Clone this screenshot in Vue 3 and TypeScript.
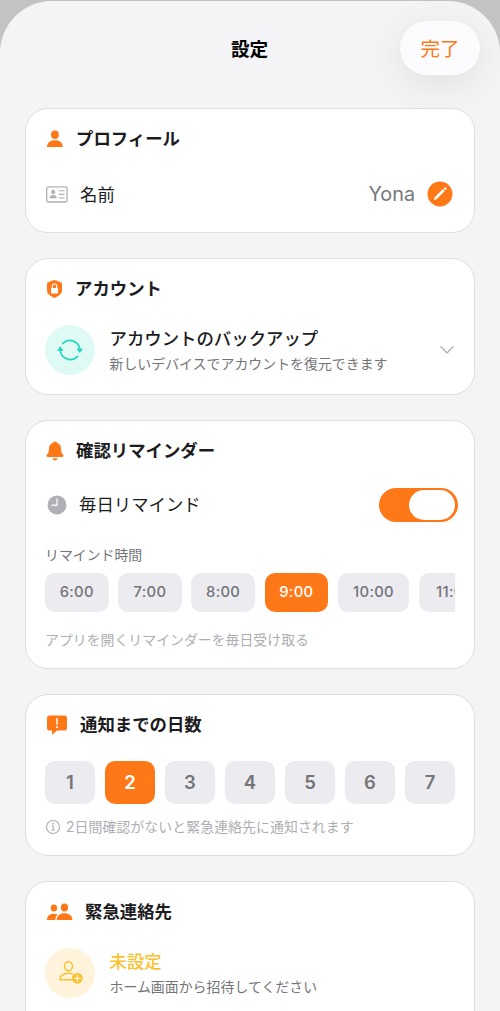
<script setup lang="ts">
import { ref } from 'vue'

const times: string[] = ['6:00', '7:00', '8:00', '9:00', '10:00', '11:00']
const days: number[] = [1, 2, 3, 4, 5, 6, 7]
const selectedTime = ref<string>('9:00')
const selectedDays = ref<number>(2)
const dailyReminder = ref<boolean>(true)
</script>

<template>
  <div class="backdrop">
    <main class="sheet">
      <header class="navbar">
        <span></span>
        <h1>設定</h1>
        <button class="done">完了</button>
      </header>

      <section class="card profile">
        <h2>
          <svg class="i-person" width="18" height="18" viewBox="0 0 18 18" fill="#ff7818">
            <ellipse cx="8.9" cy="4.7" rx="3.9" ry="4.2" />
            <path d="M1 17C.8 12.7 4.3 10.2 8.9 10.2S17 12.7 16.8 17Z" />
          </svg>
          プロフィール
        </h2>
        <div class="row">
          <svg width="22" height="17" viewBox="0 0 22 17">
            <rect x=".7" y=".8" width="20.4" height="15.2" rx="1.8" fill="none" stroke="#b0b0b6" stroke-width="1.3" />
            <ellipse cx="7.2" cy="6" rx="2" ry="2.2" fill="#b0b0b6" />
            <path d="M3.5 12.2C3.6 9.8 5.2 9 7.2 9s3.6.8 3.7 3.2Z" fill="#b0b0b6" />
            <path d="M12.7 4.7h5.8M12.7 8.4h5.8M12.7 12h5.8" stroke="#b0b0b6" stroke-width="1.1" />
          </svg>
          <span class="label">名前</span>
          <span class="name">Yona</span>
          <svg class="edit" width="26" height="26" viewBox="0 0 26 26">
            <circle cx="13" cy="13" r="12.5" fill="#ff7818" />
            <path d="M6.800 19.100l.8-2.700 8.300-8.300 1.900 1.900-8.300 8.300ZM16.700 7.300l.9-.9q.5-.4 1 .1l.8.8q.5.5.1 1l-.9.9Z" fill="#fff" />
          </svg>
        </div>
      </section>

      <section class="card account">
        <h2>
          <svg width="17" height="20" viewBox="0 0 17 20">
            <path d="M8.5 1Q9 1 15.1 3.4q.9.4.9 1.3v7q0 2.8-2.4 4.4Q9.2 19.1 8.5 19.1t-5.1-3Q1 14.500 1 11.700v-7q0-.9.9-1.300Q8 1 8.500 1Z" fill="#ff7818" />
            <rect x="5" y="9" width="7" height="5.500" rx=".8" fill="#fff" />
            <path d="M6.300 9.300V7.200a2.200 2.400 0 0 1 4.400 0v2.100" fill="none" stroke="#fff" stroke-width="1.100" />
          </svg>
          アカウント
        </h2>
        <div class="entry">
          <span class="avatar mint">
            <svg width="26" height="24" viewBox="0 0 26 24">
              <g fill="none" stroke="#2ad5bf" stroke-width="1.700" stroke-linecap="round">
                <path d="M5.800 5.400A10.100 10.100 0 0 1 22.900 11.500" />
                <path d="M20.600 18.300A10.100 10.100 0 0 1 3.200 12" />
              </g>
              <path d="M20.300 10.600h5q.7.100.2.800l-2.200 3q-.5.500-1 0l-2.200-3q-.5-.7.200-.8ZM.800 13h5q.7-.1.200-.8L3.800 8.800q-.5-.6-1 0L.600 12.200q-.5.700.2.800Z" fill="#2ad5bf" />
            </svg>
          </span>
          <div class="copy">
            <strong>アカウントのバックアップ</strong>
            <small>新しいデバイスでアカウントを復元できます</small>
          </div>
          <svg class="chevron" width="16" height="10" viewBox="0 0 16 10" fill="none" stroke="#b3b3b8" stroke-width="1.400" stroke-linecap="round" stroke-linejoin="round">
            <path d="M2 1.700 8 7.900 14 1.700" />
          </svg>
        </div>
      </section>

      <section class="card reminder">
        <h2>
          <svg width="18" height="20" viewBox="0 0 18 20" fill="#ff7818">
            <path d="M9 .5q1.900 0 2.200 1.400 3.700 1.300 3.800 5.400c.1 4.200.6 4.600 2 6.200 1.100 1.400.4 2.500-.7 2.500H1.700C.6 16 0 14.900 1 13.500c1.400-1.600 1.900-2 2-6.200Q3.100 3.200 6.800 1.900 7.100.5 9 .5ZM6.400 17.200h5.200Q11 19.500 9 19.500t-2.600-2.300Z" />
          </svg>
          確認リマインダー
        </h2>
        <div class="row">
          <svg class="i-clock" width="20" height="20" viewBox="0 0 20 20">
            <circle cx="10" cy="10" r="9.400" fill="#b0b0b6" />
            <path d="M10 3.900v6.200H4.900" fill="none" stroke="#fff" stroke-width="1.200" stroke-linecap="round" />
          </svg>
          <span class="label">毎日リマインド</span>
          <button
            class="switch"
            :class="{ on: dailyReminder }"
            role="switch"
            :aria-checked="dailyReminder"
            @click="dailyReminder = !dailyReminder"
          ><i></i></button>
        </div>
        <p class="caption">リマインド時間</p>
        <div class="times">
          <button
            v-for="time in times"
            :key="time"
            :class="{ active: time === selectedTime, wide: time.length > 4 }"
            @click="selectedTime = time"
          >{{ time }}</button>
        </div>
        <p class="hint">アプリを開くリマインダーを毎日受け取る</p>
      </section>

      <section class="card interval">
        <h2>
          <svg width="22" height="20" viewBox="0 0 22 20">
            <path d="M3.500.500h15q2.500 0 2.500 2.500v10q0 2.500-2.500 2.500H11l-4.200 3.700q-.8.600-.8-.4v-3.300H3.500Q1 15.500 1 13V3Q1 .500 3.500.500Z" fill="#ff7818" />
            <path d="M11 3.700v5.500" stroke="#fff" stroke-width="1.500" stroke-linecap="round" />
            <circle cx="11" cy="12.100" r="1" fill="#fff" />
          </svg>
          通知までの日数
        </h2>
        <div class="days">
          <button
            v-for="day in days"
            :key="day"
            :class="{ active: day === selectedDays }"
            @click="selectedDays = day"
          >{{ day }}</button>
        </div>
        <p class="hint info">
          <svg width="16" height="16" viewBox="0 0 16 16" fill="none" stroke="#aeaeb2">
            <circle cx="8" cy="8" r="6.500" stroke-width="1.100" />
            <path d="M6.700 6.900h1.500v4.200M6.300 11.200h3.600" stroke-width="1.100" />
            <circle cx="7.900" cy="4.600" r=".9" fill="#aeaeb2" stroke="none" />
          </svg>
          {{ selectedDays }}日間確認がないと緊急連絡先に通知されます
        </p>
      </section>

      <section class="card contacts">
        <h2>
          <svg width="27" height="18" viewBox="0 0 27 18" fill="#ff7818">
            <ellipse cx="7.900" cy="5.100" rx="3.200" ry="3.500" />
            <ellipse cx="18.500" cy="4.600" rx="3.600" ry="4" />
            <path d="M10.600 17C10.500 12.700 14 10.200 18.500 10.200s8 2.500 7.900 6.800ZM1 17c-.2-3.900 2.600-6.300 6.800-6.300q2.100 0 3.600.8Q9.300 13.600 9.300 17Z" />
          </svg>
          緊急連絡先
        </h2>
        <div class="entry">
          <span class="avatar cream">
            <svg width="26" height="26" viewBox="0 0 26 26">
              <ellipse cx="11.500" cy="6.200" rx="4" ry="4.500" fill="none" stroke="#fcbf2d" stroke-width="1.500" />
              <path d="M14.600 19.800H3.200C2.800 15.500 6.800 13.200 11.500 13.200q2.100 0 3.900.7" fill="none" stroke="#fcbf2d" stroke-width="1.500" stroke-linecap="round" stroke-linejoin="round" />
              <circle cx="20.300" cy="18.300" r="5.400" fill="#fcbf2d" />
              <path d="M20.300 15.300v6M17.300 18.300h6" stroke="#fff5dc" stroke-width="1.200" stroke-linecap="round" />
            </svg>
          </span>
          <div class="copy">
            <strong class="unset">未設定</strong>
            <small>ホーム画面から招待してください</small>
          </div>
        </div>
      </section>
    </main>
  </div>
</template>

<style>
body {
  overflow: hidden;
}
</style>

<style scoped>
* {
  box-sizing: border-box;
}

.backdrop {
  height: 1011px;
  overflow: hidden;
  padding-top: 1px;
  background: #c3c3c5;
  color: #1c1c1e;
  font-family: Inter, 'Noto Sans CJK JP', sans-serif;
}

.sheet {
  height: 1010px;
  overflow: hidden;
  border-radius: 52px 52px 0 0;
  background: #f4f4f7;
}

h1,
h2,
p {
  margin: 0;
}

button {
  border: 0;
  padding: 0;
  font-family: inherit;
}

svg {
  display: block;
  flex: none;
}

.navbar {
  display: grid;
  grid-template-columns: 1fr auto 1fr;
  align-items: center;
  height: 93px;
  padding: 0 20px;
}

h1 {
  padding: 2px 1px 0 0;
  color: #000;
  font-size: 18.600px;
  font-weight: 700;
  line-height: 28px;
}

.done {
  justify-self: end;
  width: 80px;
  height: 54px;
  border-radius: 27px;
  background: #fcfcfe;
  box-shadow: 0 8px 36px rgba(0, 0, 0, 0.085);
  color: #ff7818;
  font-size: 19.600px;
  font-weight: 400;
}

.card {
  display: flex;
  flex-direction: column;
  width: 450px;
  margin: 0 auto 25px;
  padding: 0 19px;
  border: 1px solid #dedee2;
  border-radius: 23px;
  background: #fff;
}

.profile {
  height: 125px;
  margin-top: 14px;
}

.account {
  height: 137px;
}

.reminder {
  height: 249px;
}

.interval {
  height: 162px;
}

.contacts {
  height: 160px;
}

h2 {
  display: flex;
  align-items: center;
  gap: 12px;
  height: 60px;
  padding-left: 1px;
  font-size: 17.400px;
  font-weight: 600;
  line-height: 26px;
}

.row {
  display: flex;
  align-items: center;
  height: 50px;
  padding-left: 1px;
}

.reminder .row {
  height: 47px;
}

.label {
  margin-left: 12px;
  font-size: 17.400px;
  line-height: 26px;
}

.profile .label {
  padding-top: 1px;
}

.i-clock {
  margin-left: 1px;
}

.name {
  margin-left: auto;
  color: #77777b;
  font-size: 19.800px;
}

.edit {
  margin: 0 2px 0 12px;
}

.entry {
  display: flex;
  align-items: center;
  height: 62px;
}

.avatar {
  display: grid;
  place-items: center;
  flex: none;
  width: 50px;
  height: 50px;
  border-radius: 50%;
}

.mint {
  padding-right: 1px;
  background: #dff9f5;
}

.cream {
  background: #fff4db;
}

.copy {
  display: flex;
  flex-direction: column;
  flex: 1;
  margin-left: 14.500px;
  padding-top: 2px;
}

.copy strong {
  font-size: 17.400px;
  font-weight: 500;
  line-height: 26px;
}

.copy small {
  color: #747478;
  font-size: 13.930px;
  line-height: 24px;
}

.copy .unset {
  color: #fcbf2d;
}

.switch {
  width: 79px;
  height: 34px;
  margin: 0 -3px 0 auto;
  padding: 2px 3px;
  border-radius: 17px;
  background: #d9d9de;
}

.switch i {
  display: block;
  width: 46px;
  height: 30px;
  border-radius: 15px;
  background: #fff;
}

.switch.on {
  background: #ff7818;
}

.switch.on i {
  margin-left: auto;
}

.caption {
  margin-top: 15px;
  color: #747478;
  font-size: 13.900px;
  line-height: 24px;
}

.times {
  display: flex;
  gap: 9.700px;
  margin-top: 6px;
  overflow: hidden;
}

.times button,
.days button {
  background: #ebebf0;
  color: #747478;
}

.times button {
  flex: none;
  width: 63.500px;
  height: 38.500px;
  border-radius: 10px;
  font-size: 14.800px;
  font-weight: 500;
  letter-spacing: 0.300px;
}

.times .wide {
  width: 71.500px;
}

.times .active,
.days .active {
  background: #ff7818;
  color: #fff;
}

.hint {
  margin-top: 16px;
  color: #aeaeb2;
  font-size: 13.900px;
  line-height: 24px;
}

.days {
  display: flex;
  gap: 10px;
  margin-top: 6px;
}

.days button {
  flex: 1;
  height: 42.500px;
  border-radius: 10px;
  font-size: 18.500px;
  font-weight: 600;
}

.info {
  display: flex;
  align-items: center;
  gap: 5px;
  margin-top: 11px;
  letter-spacing: 0.070px;
}
</style>
